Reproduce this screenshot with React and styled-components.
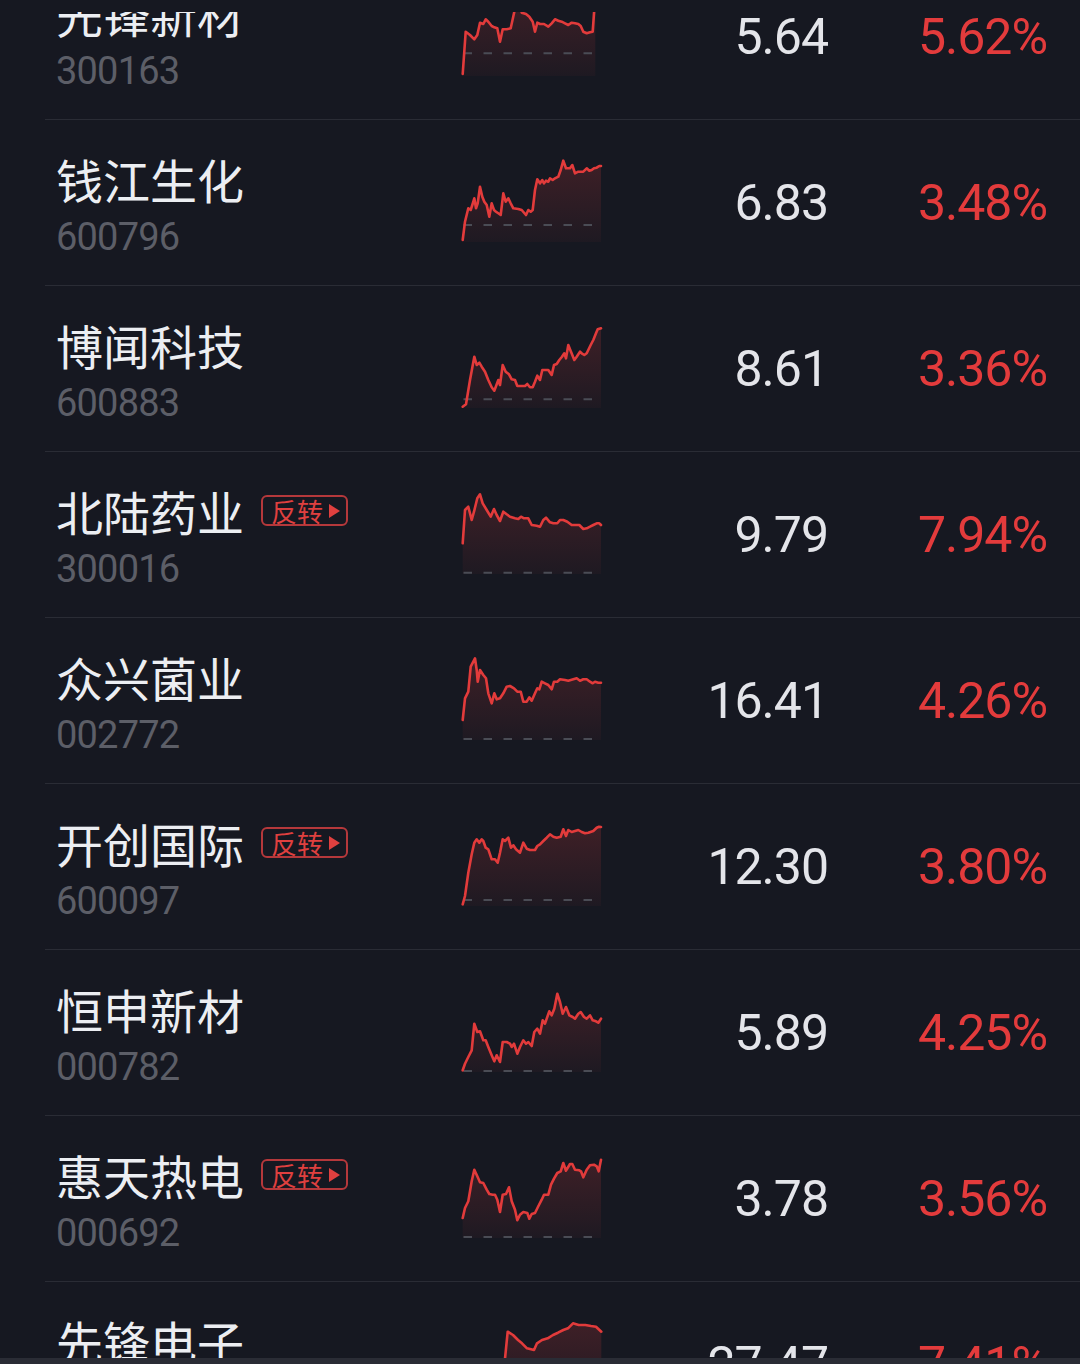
import React from "react";
import styled, { createGlobalStyle } from "styled-components";

const GlobalStyle = createGlobalStyle`
  html, body {
    margin: 0;
    padding: 0;
    background: #161821;
  }
  body {
    font-family: Roboto, "Noto Sans CJK SC", sans-serif;
  }
`;

const Screen = styled.div`
  width: 1080px;
  height: 1364px;
  display: flex;
  flex-direction: column;
  background: #161821;
  overflow: hidden;
`;

const TopGap = styled.div`
  flex: none;
  height: 12px;
`;

const Viewport = styled.div`
  flex: none;
  height: 1346px;
  overflow: hidden;
`;

const BottomBar = styled.div`
  flex: none;
  height: 6px;
  background: #2a2c35;
`;

const List = styled.div`
  margin: -58px 0 0 45px;
`;

const Row = styled.div`
  display: grid;
  grid-template-columns: 406px 140px 226px 219px;
  height: 165px;
  padding: 0 33px 0 11px;
  border-bottom: 1px solid #2a2c35;
`;

const NameCell = styled.div`
  display: flex;
  flex-direction: column;
  padding-top: 35px;
`;

const NameLine = styled.div`
  display: flex;
  align-items: center;
  gap: 17px;
  height: 47px;
`;

const Name = styled.span`
  font-family: "Noto Sans CJK SC", "Noto Sans", sans-serif;
  font-size: 47px;
  line-height: 47px;
  color: #eceef2;
  white-space: nowrap;
`;

const Tag = styled.span`
  display: inline-flex;
  align-items: center;
  gap: 6px;
  box-sizing: border-box;
  height: 31px;
  padding: 0 6px 0 8px;
  border: 2px solid #b5383b;
  border-radius: 6px;
  color: #e0403f;
  font-family: "Noto Sans CJK SC", sans-serif;
  font-size: 26px;
  line-height: 26px;
`;

const Arrow = styled.span`
  width: 0;
  height: 0;
  border-left: 11px solid #e0403f;
  border-top: 7px solid transparent;
  border-bottom: 7px solid transparent;
`;

const Code = styled.span`
  margin-top: 16px;
  font-family: Roboto, sans-serif;
  font-size: 38px;
  line-height: 38px;
  letter-spacing: -0.8px;
  color: #5c5e67;
`;

const ChartCell = styled.div`
  align-self: start;
  margin-top: 40px;
  height: 82px;

  svg {
    display: block;
    overflow: visible;
  }
`;

const Num = styled.div`
  align-self: center;
  text-align: right;
  font-family: Roboto, sans-serif;
  font-size: 50px;
  line-height: 50px;
  letter-spacing: -1px;
  color: ${(p) => (p.$up ? "#e33b3c" : "#e4e5ea")};
`;

// chart points are traced from 3x crops: x/3 - 22, y/3 + dy
const stocks = [
  {
    name: "先锋新材",
    code: "300163",
    price: "5.64",
    pct: "5.62%",
    dy: 6,
    base: 59.3,
    pts: [
      [68, 222], [77, 95], [90, 105], [103, 118], [112, 105], [120, 68], [130, 72],
      [137, 58], [145, 65], [155, 78], [163, 82], [172, 85], [180, 125], [188, 88],
      [200, 88], [212, 85], [222, 40], [228, 10], [235, -8], [242, 15], [245, 38],
      [258, 42], [268, 50], [278, 65], [285, 95], [292, 68], [300, 72], [312, 72],
      [325, 80], [335, 70], [345, 58], [355, 62], [365, 65], [375, 70], [385, 75],
      [395, 68], [405, 70], [415, 72], [422, 78], [430, 95], [440, 100], [450, 97],
      [458, 95], [462, 40], [466, -10],
    ],
  },
  {
    name: "钱江生化",
    code: "600796",
    price: "6.83",
    pct: "3.48%",
    dy: -20,
    base: 65,
    pts: [
      [68, 300], [75, 245], [85, 205], [92, 210], [97, 195], [103, 175], [108, 205],
      [113, 190], [120, 140], [127, 170], [133, 185], [140, 195], [148, 230], [155, 190],
      [162, 210], [168, 215], [175, 220], [182, 225], [190, 160], [197, 185], [205, 175],
      [212, 190], [220, 205], [235, 207], [245, 210], [258, 225], [265, 210], [272, 215],
      [278, 210], [285, 150], [292, 118], [300, 130], [307, 120], [312, 130], [318, 122],
      [325, 125], [330, 115], [338, 120], [345, 115], [355, 110], [362, 90], [370, 62],
      [378, 85], [390, 85], [397, 75], [405, 100], [415, 95], [430, 95], [440, 85],
      [448, 92], [455, 90], [462, 85], [470, 83], [478, 78], [483, 78],
    ],
  },
  {
    name: "博闻科技",
    code: "600883",
    price: "8.61",
    pct: "3.36%",
    dy: -16,
    base: 73.3,
    pts: [
      [68, 290], [78, 283], [90, 210], [103, 140], [110, 165], [118, 158], [125, 170],
      [135, 185], [145, 210], [155, 232], [163, 242], [175, 210], [180, 225], [188, 165],
      [197, 185], [207, 193], [215, 208], [225, 210], [232, 228], [240, 228], [255, 228],
      [262, 222], [270, 232], [278, 232], [285, 215], [292, 197], [300, 210], [307, 180],
      [315, 180], [325, 180], [335, 195], [342, 165], [350, 162], [358, 150], [366, 140],
      [373, 130], [378, 145], [385, 105], [393, 125], [403, 150], [410, 140], [420, 125],
      [425, 130], [433, 135], [440, 130], [452, 105], [460, 90], [468, 70], [473, 58],
      [483, 55],
    ],
  },
  {
    name: "北陆药业",
    code: "300016",
    price: "9.79",
    pct: "7.94%",
    tag: true,
    dy: -17,
    base: 80.7,
    pts: [
      [68, 205], [75, 105], [85, 95], [95, 135], [102, 110], [112, 70], [120, 58],
      [128, 85], [140, 105], [152, 125], [162, 102], [170, 120], [180, 138], [190, 110],
      [200, 118], [210, 125], [225, 130], [235, 132], [243, 125], [252, 130], [265, 130],
      [275, 150], [290, 152], [300, 155], [310, 135], [318, 128], [330, 142], [340, 145],
      [352, 145], [360, 135], [370, 135], [382, 140], [395, 150], [405, 150], [418, 150],
      [430, 162], [440, 160], [450, 155], [460, 150], [470, 145], [478, 145], [483, 150],
    ],
  },
  {
    name: "众兴菌业",
    code: "002772",
    price: "16.41",
    pct: "4.26%",
    dy: -18,
    base: 81,
    pts: [
      [68, 240], [75, 175], [85, 155], [92, 80], [100, 65], [105, 55], [110, 90],
      [113, 125], [120, 90], [130, 105], [138, 115], [145, 160], [155, 190], [163, 160],
      [170, 178], [180, 175], [190, 160], [200, 140], [210, 138], [222, 145], [232, 155],
      [242, 155], [250, 185], [260, 185], [268, 172], [275, 182], [285, 160], [292, 145],
      [298, 148], [305, 125], [315, 130], [325, 135], [335, 148], [342, 125], [352, 125],
      [360, 118], [375, 120], [385, 122], [400, 118], [410, 115], [420, 122], [430, 118],
      [440, 118], [450, 125], [458, 130], [465, 125], [475, 128], [483, 128],
    ],
  },
  {
    name: "开创国际",
    code: "600097",
    price: "12.30",
    pct: "3.80%",
    tag: true,
    dy: -18,
    base: 76,
    pts: [
      [68, 295], [75, 270], [85, 200], [95, 145], [103, 110], [110, 100], [118, 110],
      [125, 100], [130, 105], [137, 125], [145, 130], [155, 160], [165, 160], [173, 170],
      [180, 140], [188, 100], [195, 105], [205, 95], [213, 125], [220, 118], [228, 130],
      [240, 140], [250, 110], [260, 128], [270, 132], [285, 132], [292, 120], [300, 115],
      [310, 105], [320, 95], [330, 85], [340, 92], [350, 95], [362, 92], [370, 70],
      [378, 90], [385, 72], [395, 78], [405, 75], [415, 72], [425, 78], [435, 82],
      [445, 80], [460, 75], [470, 65], [477, 62], [483, 63],
    ],
  },
  {
    name: "恒申新材",
    code: "000782",
    price: "5.89",
    pct: "4.25%",
    dy: -18,
    base: 81,
    pts: [
      [68, 295], [75, 275], [85, 255], [95, 235], [103, 155], [112, 180], [120, 178],
      [130, 205], [137, 205], [145, 225], [155, 250], [163, 268], [170, 250], [180, 270],
      [188, 210], [200, 210], [210, 215], [215, 225], [222, 215], [232, 245], [240, 225],
      [250, 205], [258, 215], [265, 210], [275, 222], [283, 180], [292, 170], [300, 185],
      [308, 145], [315, 155], [320, 140], [328, 118], [335, 130], [343, 110], [352, 65],
      [360, 90], [368, 125], [378, 105], [388, 130], [398, 135], [405, 140], [415, 125],
      [422, 120], [432, 135], [440, 140], [450, 130], [458, 145], [468, 148], [475, 152],
      [483, 140],
    ],
  },
  {
    name: "惠天热电",
    code: "000692",
    price: "3.78",
    pct: "3.56%",
    tag: true,
    dy: -18,
    base: 81,
    pts: [
      [68, 240], [75, 210], [85, 190], [95, 130], [103, 95], [112, 115], [120, 133],
      [130, 135], [140, 155], [148, 168], [158, 170], [165, 170], [172, 185], [180, 222],
      [188, 170], [198, 168], [207, 148], [215, 190], [225, 215], [232, 247], [240, 230],
      [250, 222], [262, 225], [268, 242], [275, 228], [285, 225], [295, 205], [305, 185],
      [312, 170], [325, 170], [333, 140], [342, 122], [352, 105], [362, 100], [370, 75],
      [378, 98], [390, 78], [397, 78], [405, 95], [418, 97], [423, 100], [430, 118],
      [440, 95], [450, 82], [462, 80], [470, 85], [476, 100], [483, 65],
    ],
  },
  {
    name: "先锋电子",
    code: "002767",
    price: "27.47",
    pct: "7.41%",
    dy: -62,
    base: 81,
    pts: [
      [195, 296], [203, 215], [219, 225], [234, 240], [246, 250], [261, 265], [282, 270],
      [291, 250], [306, 240], [323, 235], [339, 225], [354, 218], [370, 210], [384, 205],
      [399, 190], [416, 195], [436, 195], [453, 198], [468, 200], [484, 215],
    ],
  },
];

const Spark = ({ pts, dy, base, id }) => {
  const p = pts.map(([x, y]) => [x / 3 - 22, y / 3 + dy]);
  const line = p.map(([x, y]) => `${x.toFixed(1)},${y.toFixed(1)}`).join(" ");
  const first = p[0][0].toFixed(1);
  const last = p[p.length - 1][0].toFixed(1);
  const area = `${line} ${last},82 ${first},82`;

  return (
    <svg width="140" height="82" viewBox="0 0 140 82">
      <defs>
        <linearGradient id={id} x1="0" y1="0" x2="0" y2="1">
          <stop offset="0" stopColor="#e03c3c" stopOpacity="0.2" />
          <stop offset="1" stopColor="#e03c3c" stopOpacity="0.04" />
        </linearGradient>
      </defs>
      <polygon points={area} fill={`url(#${id})`} />
      <line
        x1="1.5"
        x2="131"
        y1={base}
        y2={base}
        stroke="#4a4c55"
        strokeWidth="2"
        strokeDasharray="8.5 11.5"
      />
      <polyline
        points={line}
        fill="none"
        stroke="#e23b3b"
        strokeWidth="2.6"
        strokeLinejoin="round"
        strokeLinecap="round"
      />
    </svg>
  );
};

const App = () => (
  <>
    <GlobalStyle />
    <Screen>
      <TopGap />
      <Viewport>
        <List>
          {stocks.map((s, i) => (
            <Row key={s.code}>
              <NameCell>
                <NameLine>
                  <Name>{s.name}</Name>
                  {s.tag && (
                    <Tag>
                      反转
                      <Arrow />
                    </Tag>
                  )}
                </NameLine>
                <Code>{s.code}</Code>
              </NameCell>
              <ChartCell>
                <Spark pts={s.pts} dy={s.dy} base={s.base} id={`fill${i}`} />
              </ChartCell>
              <Num>{s.price}</Num>
              <Num $up>{s.pct}</Num>
            </Row>
          ))}
        </List>
      </Viewport>
      <BottomBar />
    </Screen>
  </>
);

export default App;
